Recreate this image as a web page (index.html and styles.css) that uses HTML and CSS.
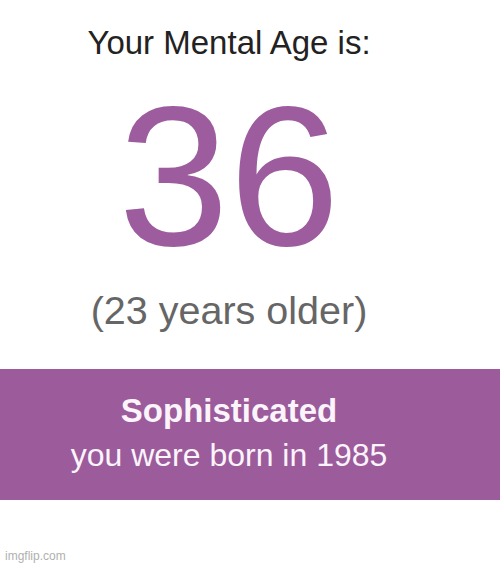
FILE: index.html
```html
<!DOCTYPE html>
<html>
<head>
    <title>Mental Age</title>
    <meta http-equiv="Content-Type" content="text/html; charset=utf-8">
    <link rel="stylesheet" href="styles.css">
</head>
<body>

<div id="result">
    <h1>Your Mental Age is:</h1>
    <p class="age">36</p>
    <p class="diff">(23 years older)</p>
</div>

<div id="band">
    <p class="title">Sophisticated</p>
    <p class="born">you were born in 1985</p>
</div>

<p id="watermark">imgflip.com</p>

</body>
</html>
```

FILE: styles.css
```css
body, html {
    width: 100%;
    height: 100%;
    margin: 0;
    padding: 0;
    font-family: 'Liberation Sans', Arial, sans-serif;
    background-color: white;
}

body {
    position: relative;
}

p, h1 {
    margin: 0;
    padding: 0;
    line-height: 1;
}

#result {
    padding: 26px 42px 0 0;
    text-align: center;
}

h1 {
    font-size: 33px;
    font-weight: normal;
    color: #222222;
}

.age {
    margin-top: 18px;
    font-size: 199px;
    color: #9c5c9e;
}

.diff {
    margin-top: 15px;
    font-size: 39.5px;
    color: #666666;
}

#band {
    margin-top: 38px;
    padding: 25px 42px 29px 0;
    background-color: #9c5b9b;
    text-align: center;
    color: #fbf4fb;
}

.title {
    font-size: 33px;
    font-weight: bold;
}

.born {
    margin-top: 12px;
    font-size: 32px;
}

#watermark {
    position: absolute;
    left: 5px;
    bottom: 5px;
    font-size: 12px;
    color: #b0b0b0;
}
```
